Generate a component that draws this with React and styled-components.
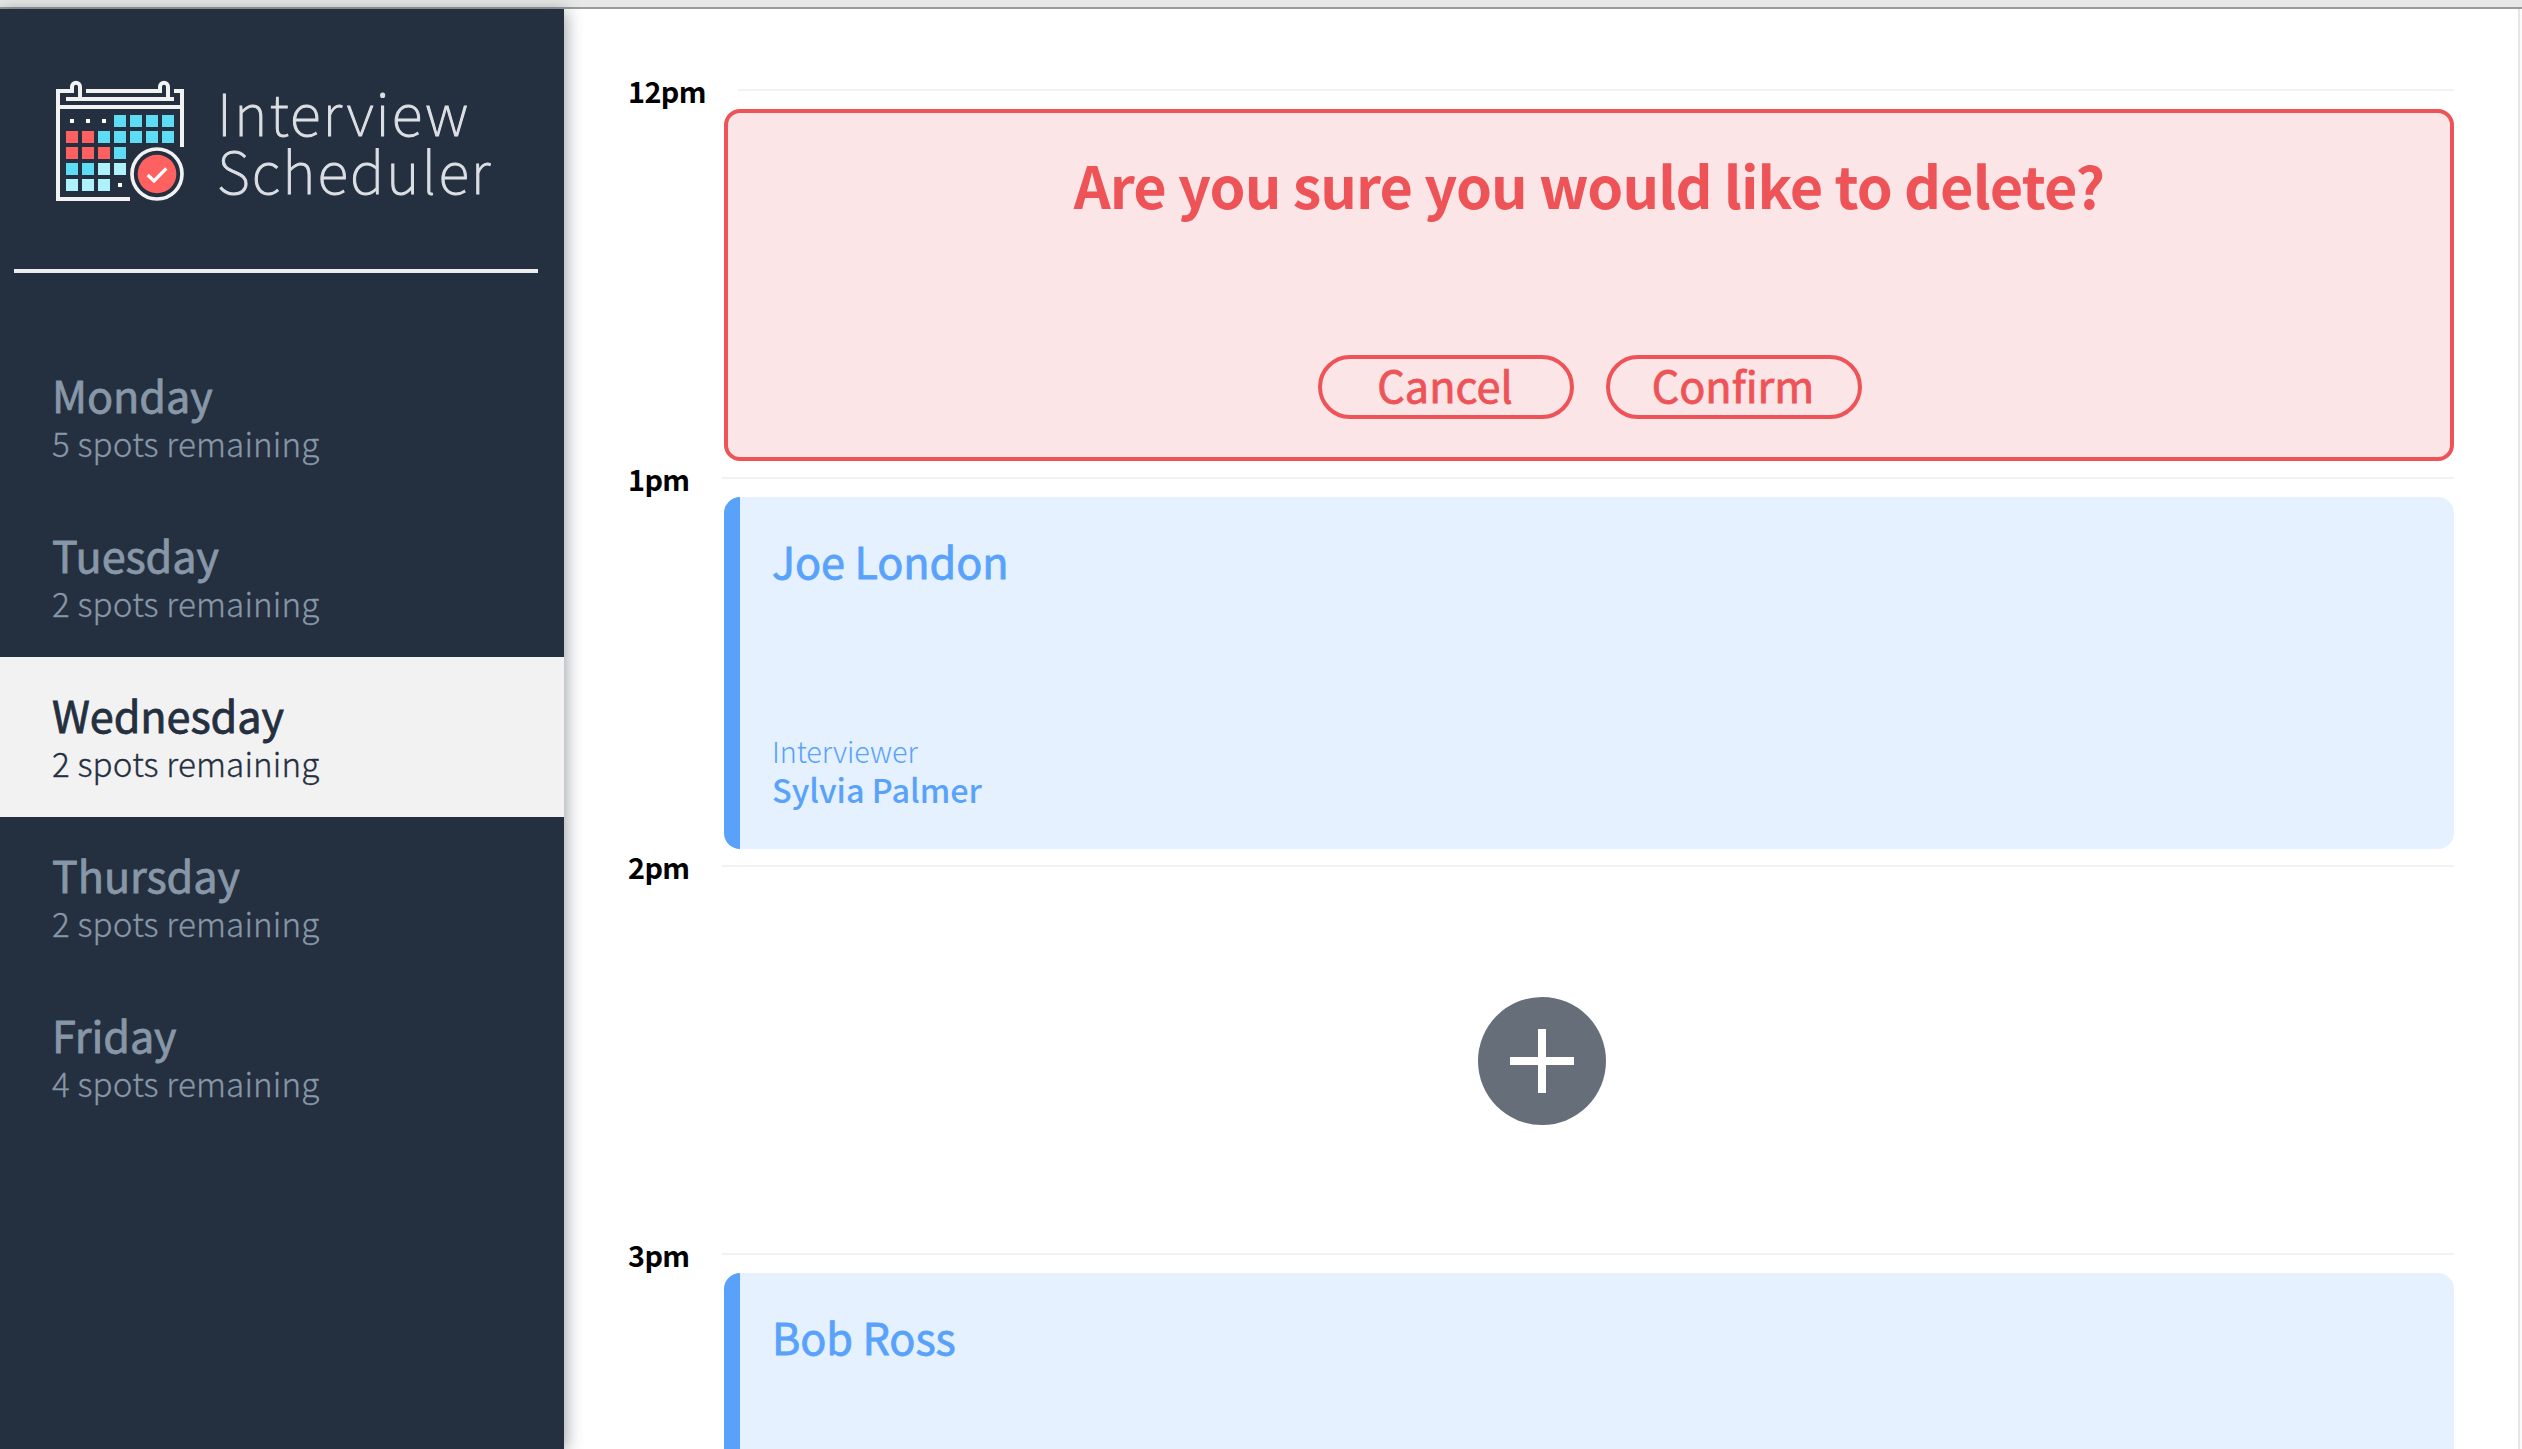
import React from "react";
import styled, { createGlobalStyle } from "styled-components";

const GlobalStyle = createGlobalStyle`
  *, *::before, *::after { box-sizing: border-box; }
  body {
    margin: 0;
    background: #fff;
    font-family: "Noto Sans CJK SC", "Noto Sans", sans-serif;
    font-weight: 400;
    -webkit-font-smoothing: antialiased;
  }
  h1, h2, h3, h4, p, ul { margin: 0; padding: 0; }
`;

const Page = styled.div`
  display: flex;
  flex-direction: column;
  width: 100%;
  height: 1449px;
  overflow: hidden;
`;

const WindowEdge = styled.div`
  flex: none;
  height: 9px;
  background: #e8e8e8;
  border-bottom: 2px solid #9b9b9b;
`;

const Layout = styled.main`
  flex: 1;
  min-height: 0;
  display: flex;
`;

const Sidebar = styled.section`
  flex: none;
  width: 564px;
  background: #242f3f;
  box-shadow: 2px 2px 16px rgba(36, 47, 63, 0.45);
  z-index: 1;
`;

const Brand = styled.div`
  display: flex;
  align-items: flex-start;
  gap: 32px;
  height: 260px;
  padding: 71px 0 0 56px;
`;

const BrandName = styled.h1`
  padding-top: 2px;
  font-size: 57.6px;
  font-weight: 100;
  line-height: 58px;
  letter-spacing: 2.1px;
  color: #dcdfe3;
  -webkit-text-stroke: 1px currentColor;
`;

const Separator = styled.hr`
  width: 524px;
  height: 4px;
  margin: 0 0 0 14px;
  border: 0;
  background: #ededed;
`;

const DayList = styled.ul`
  margin-top: 64px;
  list-style: none;
`;

const DayItem = styled.li`
  height: 160px;
  padding: 29px 0 0 52px;
  color: ${(p) => (p.$selected ? "#242f3f" : "#8797a7")};
  background: ${(p) => (p.$selected ? "#f2f2f2" : "transparent")};
`;

const DayName = styled.h2`
  font-size: 43.2px;
  font-weight: 400;
  line-height: 56px;
  letter-spacing: -0.1px;
  -webkit-text-stroke: 0.8px currentColor;
`;

const DaySpots = styled.h3`
  font-size: 33.2px;
  font-weight: 300;
  line-height: 42px;
  letter-spacing: 0.15px;
  -webkit-text-stroke: 0.3px currentColor;
`;

const Schedule = styled.section`
  flex: 1;
  min-width: 0;
  padding: 70px 64px 0;
  border-right: 2px solid #e6e6e6;
`;

const Gutter = styled.div`
  flex: none;
  width: 2px;
  background: #fafafa;
`;

const Slot = styled.article`
  height: 388px;
`;

const SlotHeader = styled.header`
  display: flex;
  align-items: center;
  height: 22px;
`;

const SlotTime = styled.h4`
  flex: none;
  width: ${(p) => (p.$wide ? 110 : 94)}px;
  font-size: 28.8px;
  font-weight: 700;
  line-height: 22px;
  padding-top: 2px;
  letter-spacing: -0.6px;
  color: #000;
`;

const SlotRule = styled.hr`
  flex: 1;
  height: 2px;
  margin: 0;
  border: 0;
  background: #f2f2f2;
`;

const cardBox = `
  height: 352px;
  margin: 8px 0 0 96px;
  border-radius: 16px;
`;

const ConfirmCard = styled.div`
  ${cardBox}
  display: flex;
  flex-direction: column;
  align-items: center;
  justify-content: space-between;
  padding: 30px 0 38px;
  border: 4px solid #ee5457;
  background: #fbe5e6;
  color: #ee5457;
`;

const ConfirmMessage = styled.h1`
  font-size: 57.6px;
  font-weight: 700;
  line-height: 82px;
  letter-spacing: -0.92px;
  white-space: nowrap;
`;

const ConfirmActions = styled.div`
  display: flex;
  gap: 32px;
  padding-left: 2px;
`;

const Button = styled.button`
  display: flex;
  align-items: center;
  justify-content: center;
  width: 256px;
  height: 64px;
  padding: 0 2px 6px 0;
  border: 4px solid #ee5457;
  border-radius: 32px;
  background: transparent;
  color: inherit;
  font: inherit;
  font-size: 43.2px;
  line-height: 50px;
  -webkit-text-stroke: 0.8px currentColor;
`;

const AppointmentCard = styled.div`
  ${cardBox}
  display: flex;
  flex-direction: column;
  justify-content: space-between;
  padding: 35px 32px 40px;
  border-left: 16px solid #59a2fc;
  background: #e5f1ff;
  color: #59a2fc;
`;

const Student = styled.h2`
  font-size: 43.2px;
  font-weight: 400;
  line-height: 56px;
  letter-spacing: -0.1px;
  -webkit-text-stroke: 0.8px currentColor;
`;

const InterviewerLabel = styled.h4`
  font-size: 28.8px;
  font-weight: 300;
  line-height: 36px;
  letter-spacing: -0.1px;
`;

const InterviewerName = styled.h3`
  font-size: 32.4px;
  font-weight: 500;
  line-height: 40px;
`;

const EmptySlot = styled.div`
  display: flex;
  align-items: center;
  justify-content: center;
  height: 368px;
  padding: 0 94px 0 96px;
`;

const AddButton = styled.button`
  display: block;
  width: 128px;
  height: 128px;
  padding: 0;
  border: 0;
  background: transparent;
`;

const cyan = "#5edcf4";
const pale = "#aef1fa";
const red = "#ff6161";
const cells = [
  [null, null, null, cyan, cyan, cyan, cyan],
  [red, red, cyan, cyan, cyan, cyan, cyan],
  [red, red, red, cyan],
  [cyan, cyan, pale, pale],
  [pale, pale, pale, null],
];

function CalendarLogo() {
  return (
    <svg width="129" height="122" viewBox="78 60 387 366" fill="none">
      <g stroke="#f2f2f2" strokeWidth="12">
        <path d="M456 261V93H432" />
        <path d="M300 417H84V93H126V80A12 12 0 0 1 150 80V117" />
        <path d="M168 93H390V80A12 12 0 0 1 414 80V117" />
        <path d="M108 117H432M84 141H456" />
        <circle cx="381" cy="342" r="75" strokeWidth="11" />
      </g>
      <circle cx="381" cy="342" r="58" fill={red} />
      <path d="M353 345L372 363L409 325" stroke="#fff" strokeWidth="10" />
      {cells.map((row, r) =>
        row.map((fill, c) =>
          fill ? (
            <rect key={`${r}-${c}`} x={108 + c * 48} y={165 + r * 48} width="36" height="36" fill={fill} />
          ) : (
            <rect key={`${r}-${c}`} x={120 + c * 48} y={177 + r * 48} width="12" height="12" fill="#fff" />
          )
        )
      )}
    </svg>
  );
}

function AddIcon() {
  return (
    <svg width="128" height="128" viewBox="0 0 128 128">
      <circle cx="64" cy="64" r="64" fill="#666e79" />
      <path d="M64 32V96M32 64H96" stroke="#fff" strokeWidth="8" />
    </svg>
  );
}

const days = [
  { name: "Monday", spots: 5 },
  { name: "Tuesday", spots: 2 },
  { name: "Wednesday", spots: 2, selected: true },
  { name: "Thursday", spots: 2 },
  { name: "Friday", spots: 4 },
];

function TimeSlot({ time, children }) {
  return (
    <Slot>
      <SlotHeader>
        <SlotTime $wide={time.length > 3}>{time}</SlotTime>
        <SlotRule />
      </SlotHeader>
      {children}
    </Slot>
  );
}

function Appointment({ student, interviewer }) {
  return (
    <AppointmentCard>
      <Student>{student}</Student>
      {interviewer && (
        <div>
          <InterviewerLabel>Interviewer</InterviewerLabel>
          <InterviewerName>{interviewer}</InterviewerName>
        </div>
      )}
    </AppointmentCard>
  );
}

export default function App() {
  return (
    <Page>
      <GlobalStyle />
      <WindowEdge />
      <Layout>
        <Sidebar>
          <Brand>
            <CalendarLogo />
            <BrandName>
              Interview
              <br />
              Scheduler
            </BrandName>
          </Brand>
          <Separator />
          <DayList>
            {days.map((day) => (
              <DayItem key={day.name} $selected={day.selected}>
                <DayName>{day.name}</DayName>
                <DaySpots>{day.spots} spots remaining</DaySpots>
              </DayItem>
            ))}
          </DayList>
        </Sidebar>
        <Schedule>
          <TimeSlot time="12pm">
            <ConfirmCard>
              <ConfirmMessage>Are you sure you would like to delete?</ConfirmMessage>
              <ConfirmActions>
                <Button>Cancel</Button>
                <Button>Confirm</Button>
              </ConfirmActions>
            </ConfirmCard>
          </TimeSlot>
          <TimeSlot time="1pm">
            <Appointment student="Joe London" interviewer="Sylvia Palmer" />
          </TimeSlot>
          <TimeSlot time="2pm">
            <EmptySlot>
              <AddButton aria-label="Add">
                <AddIcon />
              </AddButton>
            </EmptySlot>
          </TimeSlot>
          <TimeSlot time="3pm">
            <Appointment student="Bob Ross" />
          </TimeSlot>
        </Schedule>
        <Gutter />
      </Layout>
    </Page>
  );
}
